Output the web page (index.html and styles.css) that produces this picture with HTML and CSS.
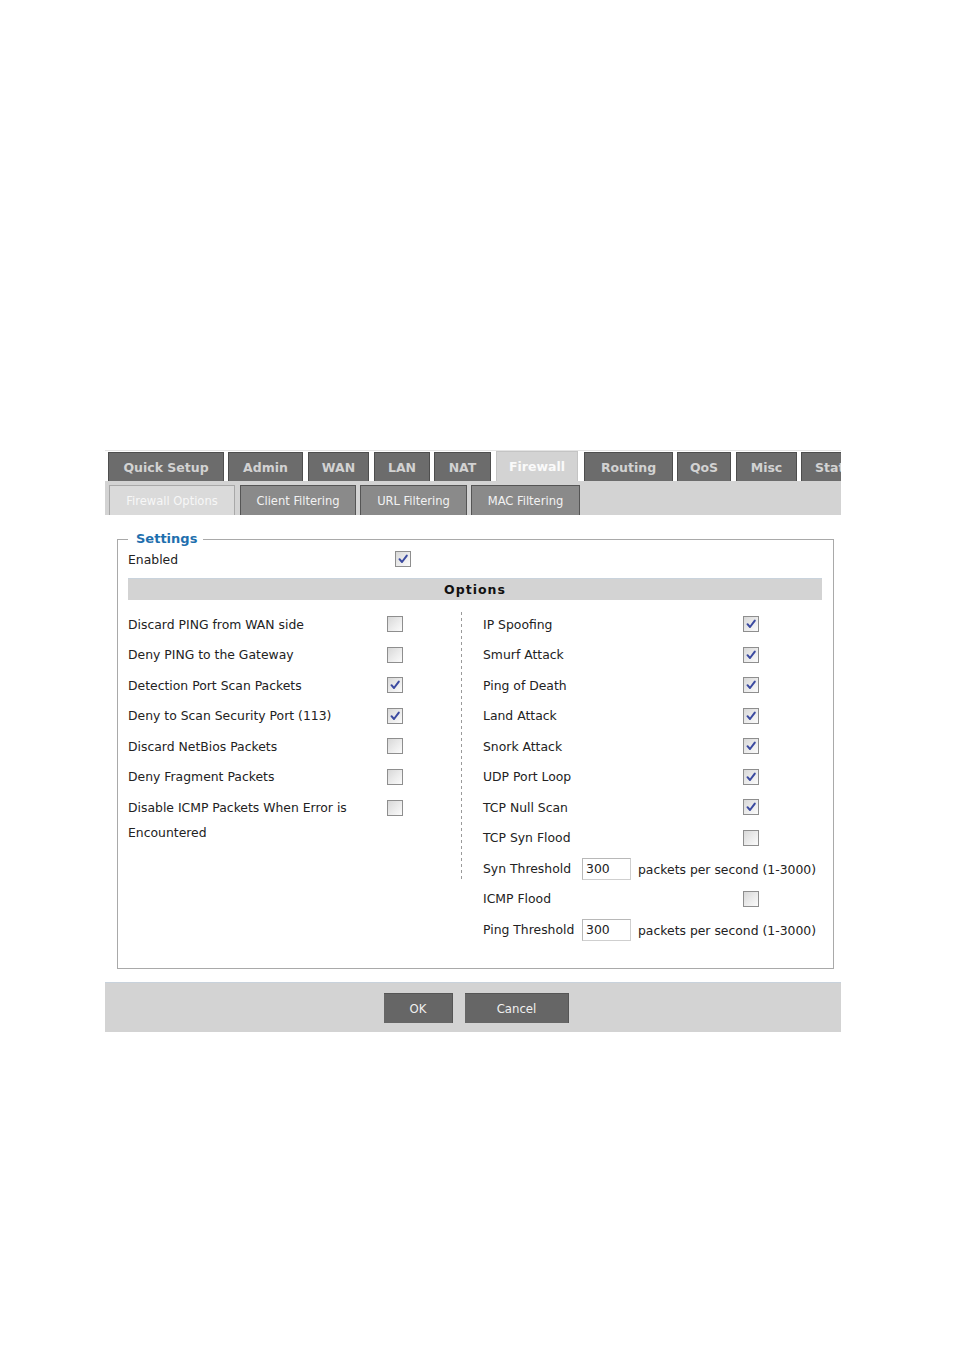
FILE: index.html
```html
<!DOCTYPE html>
<html>
<head>
<meta charset="utf-8">
<link rel="stylesheet" href="styles.css">
</head>
<body>
<div class="page">
  <div class="tabs">
    <div class="tab w1">Quick Setup</div>
    <div class="tab w2">Admin</div>
    <div class="tab w3">WAN</div>
    <div class="tab w4">LAN</div>
    <div class="tab w5">NAT</div>
    <div class="tab w6 active">Firewall</div>
    <div class="tab w7">Routing</div>
    <div class="tab w8">QoS</div>
    <div class="tab w9">Misc</div>
    <div class="tab w10">Status</div>
  </div>
  <div class="subtabs">
    <div class="subtab s1 active">Firewall Options</div>
    <div class="subtab s2">Client Filtering</div>
    <div class="subtab s3">URL Filtering</div>
    <div class="subtab s4">MAC Filtering</div>
  </div>

  <fieldset class="settings">
    <legend>Settings</legend>
    <div class="enabled-row">
      <span class="label-en">Enabled</span>
      <span class="cb on"><svg viewBox="0 0 14 14"><path d="M3.5 7.2 L6 10 L10.8 3.6" /></svg></span>
    </div>
    <div class="options-bar">Options</div>
    <div class="grid">
      <div class="col left">
        <div class="row"><span class="lbl">Discard PING from WAN side</span><span class="cb"></span></div>
        <div class="row"><span class="lbl">Deny PING to the Gateway</span><span class="cb"></span></div>
        <div class="row"><span class="lbl">Detection Port Scan Packets</span><span class="cb on"><svg viewBox="0 0 14 14"><path d="M3.5 7.2 L6 10 L10.8 3.6" /></svg></span></div>
        <div class="row"><span class="lbl">Deny to Scan Security Port (113)</span><span class="cb on"><svg viewBox="0 0 14 14"><path d="M3.5 7.2 L6 10 L10.8 3.6" /></svg></span></div>
        <div class="row"><span class="lbl">Discard NetBios Packets</span><span class="cb"></span></div>
        <div class="row"><span class="lbl">Deny Fragment Packets</span><span class="cb"></span></div>
        <div class="row wrap"><span class="lbl">Disable ICMP Packets When Error is Encountered</span><span class="cb"></span></div>
      </div>
      <div class="divider"></div>
      <div class="col right">
        <div class="row"><span class="lbl">IP Spoofing</span><span class="cb on"><svg viewBox="0 0 14 14"><path d="M3.5 7.2 L6 10 L10.8 3.6" /></svg></span></div>
        <div class="row"><span class="lbl">Smurf Attack</span><span class="cb on"><svg viewBox="0 0 14 14"><path d="M3.5 7.2 L6 10 L10.8 3.6" /></svg></span></div>
        <div class="row"><span class="lbl">Ping of Death</span><span class="cb on"><svg viewBox="0 0 14 14"><path d="M3.5 7.2 L6 10 L10.8 3.6" /></svg></span></div>
        <div class="row"><span class="lbl">Land Attack</span><span class="cb on"><svg viewBox="0 0 14 14"><path d="M3.5 7.2 L6 10 L10.8 3.6" /></svg></span></div>
        <div class="row"><span class="lbl">Snork Attack</span><span class="cb on"><svg viewBox="0 0 14 14"><path d="M3.5 7.2 L6 10 L10.8 3.6" /></svg></span></div>
        <div class="row"><span class="lbl">UDP Port Loop</span><span class="cb on"><svg viewBox="0 0 14 14"><path d="M3.5 7.2 L6 10 L10.8 3.6" /></svg></span></div>
        <div class="row"><span class="lbl">TCP Null Scan</span><span class="cb on"><svg viewBox="0 0 14 14"><path d="M3.5 7.2 L6 10 L10.8 3.6" /></svg></span></div>
        <div class="row"><span class="lbl">TCP Syn Flood</span><span class="cb"></span></div>
        <div class="row thr"><span class="tlbl">Syn Threshold</span><span class="inp">300</span><span class="unit">packets per second (1-3000)</span></div>
        <div class="row"><span class="lbl">ICMP Flood</span><span class="cb"></span></div>
        <div class="row thr"><span class="tlbl">Ping Threshold</span><span class="inp">300</span><span class="unit">packets per second (1-3000)</span></div>
      </div>
    </div>
  </fieldset>

  <div class="actions">
    <button class="btn ok">OK</button>
    <button class="btn cancel">Cancel</button>
  </div>
</div>
</body>
</html>
```
FILE: styles.css
```css
html, body {
  margin: 0;
  padding: 0;
  background: #ffffff;
}
body {
  font-family: "DejaVu Sans", Verdana, sans-serif;
  font-size: 12.4px;
  color: #222;
}
.page {
  width: 736px;
  margin-left: 105px;
  padding-top: 450px;
}
.tabs {
  display: flex;
  height: 31px;
  padding-left: 3px;
  overflow: hidden;
  border-top: 1px solid #e4e4e4;
  box-sizing: border-box;
  background: #fff;
  align-items: flex-end;
}
.tab {
  flex: none;
  box-sizing: border-box;
  height: 29px;
  margin-right: 5px;
  background: #6c6c6c;
  border: 1px solid #4e4e4e;
  border-bottom: none;
  color: #d2d2d2;
  font-weight: bold;
  font-size: 12.5px;
  display: flex;
  align-items: center;
  justify-content: center;
}
.tab.active {
  height: 30px;
  background: #d3d3d3;
  border-color: #c4c4c4;
  color: #fafafa;
}
.w1 { width: 116px; margin-right: 4px; }
.w2 { width: 75px; }
.w3 { width: 61px; }
.w4 { width: 56px; margin-right: 4px; }
.w5 { width: 57px; }
.w6 { width: 82px; margin-right: 6px; }
.w7 { width: 89px; margin-right: 4px; }
.w8 { width: 54px; }
.w9 { width: 61px; margin-right: 4px; }
.w10 { width: 80px; justify-content: flex-start; padding-left: 13px; }

.subtabs {
  display: flex;
  height: 34px;
  background: #d3d3d3;
  padding: 4px 0 0 4px;
  box-sizing: border-box;
}
.subtab {
  flex: none;
  box-sizing: border-box;
  height: 30px;
  margin-right: 5px;
  background: #8a8a8a;
  border: 1px solid #555;
  border-bottom: none;
  color: #f2f2f2;
  font-family: "DejaVu Sans Condensed", "DejaVu Sans", sans-serif;
  font-size: 12.8px;
  display: flex;
  align-items: center;
  justify-content: center;
}
.subtab.active {
  background: #dadada;
  border-color: #a8a8a8;
  color: #f7f7f7;
}
.s1 { width: 126px; }
.s2 { width: 116px; margin-right: 4px; }
.s3 { width: 107px; margin-right: 4px; }
.s4 { width: 109px; }

.settings {
  margin: 16px 7px 0 12px;
  border: 1px solid #a9a9a9;
  padding: 0 11px 23px 10px;
  min-width: 0;
}
.settings legend {
  margin-left: 0;
  padding: 0 6px 0 8px;
  color: #1f6fae;
  font-weight: bold;
  font-size: 13px;
  line-height: 16px;
}
.enabled-row {
  display: flex;
  align-items: center;
  height: 20px;
  margin-top: 2px;
}
.label-en {
  width: 267px;
}
.options-bar {
  margin-top: 9px;
  height: 22px;
  background: #d3d3d3;
  border-top: 1px solid #c9d3dc;
  box-sizing: border-box;
  display: flex;
  align-items: center;
  justify-content: center;
  font-weight: bold;
  font-size: 12.5px;
  letter-spacing: 1px;
  color: #111;
}
.grid {
  display: grid;
  grid-template-columns: 333px 1px 1fr;
  margin-top: 9px;
}
.col .row {
  display: flex;
  align-items: center;
  height: 30.5px;
}
.left .lbl {
  width: 259px;
  flex: none;
}
.left .row.wrap {
  align-items: flex-start;
  height: 56px;
}
.left .row.wrap .lbl {
  width: 232px;
  margin-right: 27px;
  line-height: 25px;
  padding-top: 2.5px;
}
.left .row.wrap .cb {
  margin-top: 7.5px;
}
.divider {
  align-self: start;
  height: 270px;
  margin-top: 3px;
  background: repeating-linear-gradient(to bottom, #9a9a9a 0 3px, transparent 3px 6px);
}
.right {
  padding-left: 21px;
}
.right .lbl {
  width: 260px;
  flex: none;
}
.tlbl {
  width: 99px;
  flex: none;
}
.inp {
  flex: none;
  box-sizing: border-box;
  width: 49px;
  height: 22px;
  border: 1px solid #cfcfcf;
  border-top-color: #b8b8b8;
  border-left-color: #b8b8b8;
  padding-left: 3px;
  display: flex;
  align-items: center;
  background: #fff;
  margin-top: 1px;
}
.unit {
  margin-left: 7px;
  padding-top: 3px;
}
.cb {
  flex: none;
  box-sizing: border-box;
  width: 16px;
  height: 16px;
  border: 1px solid #8e8e8e;
  background: linear-gradient(135deg, #d8d8d8 0%, #ececec 55%, #fbfbfb 100%);
  display: inline-flex;
  align-items: center;
  justify-content: center;
}
.cb svg {
  width: 14px;
  height: 14px;
}
.cb svg path {
  fill: none;
  stroke: #3b4aa0;
  stroke-width: 2;
  stroke-linecap: round;
  stroke-linejoin: round;
}

.actions {
  margin-top: 13px;
  height: 50px;
  background: #d3d3d3;
  border-top: 1px solid #c8d2dc;
  box-sizing: border-box;
  display: flex;
  align-items: center;
  justify-content: center;
  gap: 12px;
  padding-left: 7px;
  padding-top: 1px;
}
.btn {
  height: 30px;
  background: #666;
  border: none;
  border-top: 1px solid #555;
  border-right: 1px solid #555;
  color: #f0f0f0;
  font-family: "DejaVu Sans Condensed", "DejaVu Sans", sans-serif;
  font-size: 13px;
  padding: 0;
}
.ok { width: 69px; }
.cancel { width: 104px; }
```
